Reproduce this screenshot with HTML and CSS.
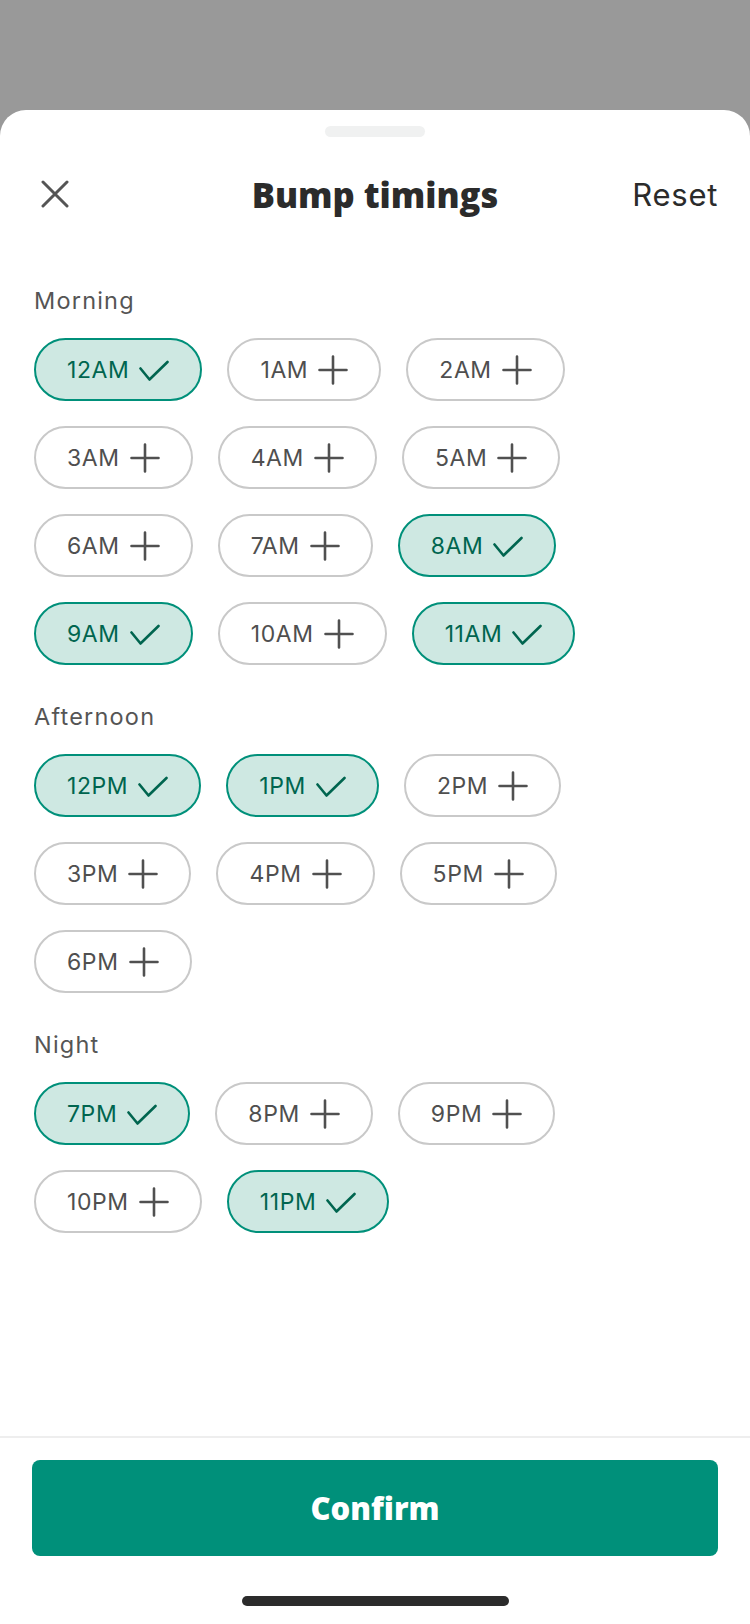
FILE: index.html
```html
<!DOCTYPE html>
<html lang="en">
<head>
<meta charset="utf-8">
<title>Bump timings</title>
<link rel="stylesheet" href="styles.css">
</head>
<body>
<div class="sheet">
  <div class="handle"></div>
  <header class="header">
    <button class="close" aria-label="Close">
      <svg viewBox="0 0 28 28" width="28" height="28"><path d="M2 2 L26 26 M26 2 L2 26" stroke="#555" stroke-width="3" stroke-linecap="round" fill="none"/></svg>
    </button>
    <h1 class="title">Bump timings</h1>
    <button class="reset">Reset</button>
  </header>

  <main class="content">
    <section class="group">
      <h2 class="label">Morning</h2>
      <div class="chips">
        <span class="chip on">12AM<svg class="ic" viewBox="0 0 30 30"><polyline points="1.5,13.5 10.5,24.5 28.5,7" /></svg></span>
        <span class="chip">1AM<svg class="ic" viewBox="0 0 30 30"><path d="M15 1.5V28.5M1.5 15H28.5"/></svg></span>
        <span class="chip">2AM<svg class="ic" viewBox="0 0 30 30"><path d="M15 1.5V28.5M1.5 15H28.5"/></svg></span>
        <span class="chip">3AM<svg class="ic" viewBox="0 0 30 30"><path d="M15 1.5V28.5M1.5 15H28.5"/></svg></span>
        <span class="chip">4AM<svg class="ic" viewBox="0 0 30 30"><path d="M15 1.5V28.5M1.5 15H28.5"/></svg></span>
        <span class="chip">5AM<svg class="ic" viewBox="0 0 30 30"><path d="M15 1.5V28.5M1.5 15H28.5"/></svg></span>
        <span class="chip">6AM<svg class="ic" viewBox="0 0 30 30"><path d="M15 1.5V28.5M1.5 15H28.5"/></svg></span>
        <span class="chip">7AM<svg class="ic" viewBox="0 0 30 30"><path d="M15 1.5V28.5M1.5 15H28.5"/></svg></span>
        <span class="chip on">8AM<svg class="ic" viewBox="0 0 30 30"><polyline points="1.5,13.5 10.5,24.5 28.5,7" /></svg></span>
        <span class="chip on">9AM<svg class="ic" viewBox="0 0 30 30"><polyline points="1.5,13.5 10.5,24.5 28.5,7" /></svg></span>
        <span class="chip">10AM<svg class="ic" viewBox="0 0 30 30"><path d="M15 1.5V28.5M1.5 15H28.5"/></svg></span>
        <span class="chip on">11AM<svg class="ic" viewBox="0 0 30 30"><polyline points="1.5,13.5 10.5,24.5 28.5,7" /></svg></span>
      </div>
    </section>

    <section class="group">
      <h2 class="label">Afternoon</h2>
      <div class="chips">
        <span class="chip on">12PM<svg class="ic" viewBox="0 0 30 30"><polyline points="1.5,13.5 10.5,24.5 28.5,7" /></svg></span>
        <span class="chip on">1PM<svg class="ic" viewBox="0 0 30 30"><polyline points="1.5,13.5 10.5,24.5 28.5,7" /></svg></span>
        <span class="chip">2PM<svg class="ic" viewBox="0 0 30 30"><path d="M15 1.5V28.5M1.5 15H28.5"/></svg></span>
        <span class="chip">3PM<svg class="ic" viewBox="0 0 30 30"><path d="M15 1.5V28.5M1.5 15H28.5"/></svg></span>
        <span class="chip">4PM<svg class="ic" viewBox="0 0 30 30"><path d="M15 1.5V28.5M1.5 15H28.5"/></svg></span>
        <span class="chip">5PM<svg class="ic" viewBox="0 0 30 30"><path d="M15 1.5V28.5M1.5 15H28.5"/></svg></span>
        <span class="chip">6PM<svg class="ic" viewBox="0 0 30 30"><path d="M15 1.5V28.5M1.5 15H28.5"/></svg></span>
      </div>
    </section>

    <section class="group">
      <h2 class="label">Night</h2>
      <div class="chips">
        <span class="chip on">7PM<svg class="ic" viewBox="0 0 30 30"><polyline points="1.5,13.5 10.5,24.5 28.5,7" /></svg></span>
        <span class="chip">8PM<svg class="ic" viewBox="0 0 30 30"><path d="M15 1.5V28.5M1.5 15H28.5"/></svg></span>
        <span class="chip">9PM<svg class="ic" viewBox="0 0 30 30"><path d="M15 1.5V28.5M1.5 15H28.5"/></svg></span>
        <span class="chip">10PM<svg class="ic" viewBox="0 0 30 30"><path d="M15 1.5V28.5M1.5 15H28.5"/></svg></span>
        <span class="chip on">11PM<svg class="ic" viewBox="0 0 30 30"><polyline points="1.5,13.5 10.5,24.5 28.5,7" /></svg></span>
      </div>
    </section>
  </main>

  <footer class="footer">
    <button class="confirm">Confirm</button>
    <div class="home"></div>
  </footer>
</div>
</body>
</html>
```

FILE: styles.css
```css
* { box-sizing: border-box; }

html, body {
  margin: 0;
  padding: 0;
  width: 750px;
  height: 1624px;
  background: #999999;
  font-family: Inter, "Open Sans", "Liberation Sans", sans-serif;
  overflow: hidden;
}

.sheet {
  margin-top: 110px;
  height: 1514px;
  background: #ffffff;
  border-radius: 26px 26px 0 0;
  display: flex;
  flex-direction: column;
}

.handle {
  width: 100px;
  height: 11px;
  border-radius: 6px;
  background: #f0f1f1;
  margin: 16px auto 0;
}

.header {
  margin-top: 17px;
  height: 80px;
  display: grid;
  grid-template-columns: 1fr auto 1fr;
  align-items: center;
  padding: 0 32px;
}

.close {
  justify-self: start;
  margin-left: 9px;
  border: 0;
  background: none;
  padding: 0;
  width: 28px;
  height: 28px;
  display: flex;
}

.title {
  margin: 0;
  font-family: "Open Sans", sans-serif;
  font-weight: 800;
  font-size: 34.5px;
  color: #2b2b2b;
  letter-spacing: 0;
}

.reset {
  justify-self: end;
  border: 0;
  background: none;
  padding: 0;
  font-family: Inter, sans-serif;
  font-size: 31px;
  font-weight: 400;
  letter-spacing: 0.7px;
  color: #2b2b2b;
}

.content {
  flex: 1;
  padding: 52px 34px 0;
  display: flex;
  flex-direction: column;
  gap: 37px;
}

.label {
  margin: 0 0 22px;
  height: 30px;
  line-height: 30px;
  font-size: 23.5px;
  font-weight: 400;
  color: #555555;
  letter-spacing: 1.2px;
}

.chips {
  display: flex;
  flex-wrap: wrap;
  gap: 25px 25px;
}

.chip {
  height: 63px;
  border: 2px solid #c9c9c9;
  border-radius: 32px;
  padding: 0 31px;
  display: inline-flex;
  align-items: center;
  gap: 10px;
  font-size: 23px;
  letter-spacing: 0.6px;
  color: #4f4f4f;
  background: #ffffff;
}

.ic {
  width: 30px;
  height: 30px;
  fill: none;
  stroke: #505050;
  stroke-width: 2.6;
  stroke-linecap: round;
  stroke-linejoin: round;
}

.chip.on {
  background: #cee8e2;
  border-color: #00907a;
  color: #00654f;
}

.chip.on .ic {
  stroke: #00654f;
}

.footer {
  border-top: 2px solid #eeeeee;
  padding: 22px 32px 0;
  height: 188px;
  display: flex;
  flex-direction: column;
  align-items: center;
}

.confirm {
  width: 686px;
  height: 96px;
  border: 0;
  border-radius: 8px;
  background: #00907a;
  color: #ffffff;
  font-family: "Open Sans", sans-serif;
  font-weight: 800;
  font-size: 31px;
}

.home {
  margin-top: 40px;
  width: 267px;
  height: 10px;
  border-radius: 5px;
  background: #2b2b2b;
}
```
